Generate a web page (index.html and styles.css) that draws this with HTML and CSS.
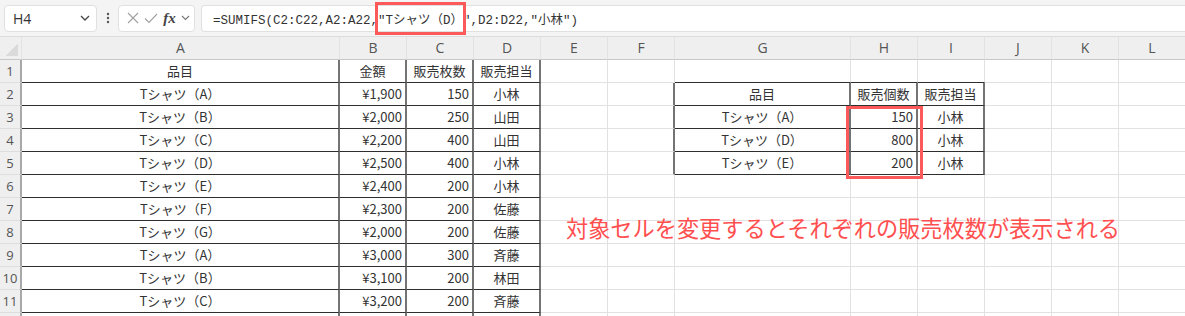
FILE: index.html
```html
<!DOCTYPE html>
<html lang="ja">
<head>
    <meta charset="UTF-8">
    <title>SUMIFS</title>
    <link rel="stylesheet" href="styles.css">
</head>
<body>
    <div class="toolbar">
        <div class="namebox">
            <span>H4</span>
            <svg width="10" height="6" viewBox="0 0 10 6"><polyline points="1,1 5,5 9,1" fill="none" stroke="#444" stroke-width="1.3"/></svg>
        </div>
        <div class="dots">
            <svg width="4" height="12" viewBox="0 0 4 12"><circle cx="2" cy="2" r="1.2" fill="#555"/><circle cx="2" cy="6" r="1.2" fill="#555"/><circle cx="2" cy="10" r="1.2" fill="#555"/></svg>
        </div>
        <div class="fxbox">
            <svg width="12" height="12" viewBox="0 0 12 12"><path d="M1 1 L11 11 M11 1 L1 11" stroke="#a0a0a0" stroke-width="1.1"/></svg>
            <svg width="14" height="11" viewBox="0 0 14 11"><polyline points="1,5.5 5,9.5 13,1" fill="none" stroke="#a0a0a0" stroke-width="1.1"/></svg>
            <span class="fx">fx</span>
            <svg width="9" height="6" viewBox="0 0 9 6"><polyline points="1,1 4.5,4.5 8,1" fill="none" stroke="#777" stroke-width="1.1"/></svg>
        </div>
        <div class="formula">
            <span>=SUMIFS(C2:C22,A2:A22,"Tシャツ（D）",D2:D22,"小林")</span>
            <div class="mark formula-mark"></div>
        </div>
    </div>

    <div class="sheet">
        <table class="grid">
            <colgroup>
                <col style="width:22px">
                <col style="width:318px">
                <col style="width:67px"><col style="width:67px"><col style="width:67px">
                <col style="width:67px"><col style="width:67px">
                <col style="width:176px">
                <col style="width:67px"><col style="width:67px"><col style="width:67px"><col style="width:67px"><col style="width:67px">
            </colgroup>
            <tr class="head">
                <th class="corner"></th>
                <th>A</th><th>B</th><th>C</th><th>D</th><th>E</th><th>F</th>
                <th>G</th><th>H</th><th>I</th><th>J</th><th>K</th><th>L</th>
            </tr>
            <tr>
                <td class="rh">1</td>
                <td class="b c">品目</td><td class="b c">金額</td><td class="b c">販売枚数</td><td class="b c">販売担当</td>
                <td></td><td></td>
                <td class="bt"></td><td class="bt"></td><td class="bt"></td>
                <td></td><td></td><td></td>
            </tr>
            <tr>
                <td class="rh">2</td>
                <td class="b c">Tシャツ（A）</td><td class="b r">¥1,900</td><td class="b r">150</td><td class="b c">小林</td>
                <td></td><td class="bl"></td>
                <td class="b c">品目</td><td class="b c">販売個数</td><td class="b c">販売担当</td>
                <td></td><td></td><td></td>
            </tr>
            <tr>
                <td class="rh">3</td>
                <td class="b c">Tシャツ（B）</td><td class="b r">¥2,000</td><td class="b r">250</td><td class="b c">山田</td>
                <td></td><td class="bl"></td>
                <td class="b c">Tシャツ（A）</td><td class="b r">150</td><td class="b c">小林</td>
                <td></td><td></td><td></td>
            </tr>
            <tr>
                <td class="rh">4</td>
                <td class="b c">Tシャツ（C）</td><td class="b r">¥2,200</td><td class="b r">400</td><td class="b c">山田</td>
                <td></td><td class="bl"></td>
                <td class="b c">Tシャツ（D）</td><td class="b r">800</td><td class="b c">小林</td>
                <td></td><td></td><td></td>
            </tr>
            <tr>
                <td class="rh">5</td>
                <td class="b c">Tシャツ（D）</td><td class="b r">¥2,500</td><td class="b r">400</td><td class="b c">小林</td>
                <td></td><td class="bl"></td>
                <td class="b c">Tシャツ（E）</td><td class="b r">200</td><td class="b c">小林</td>
                <td></td><td></td><td></td>
            </tr>
            <tr>
                <td class="rh">6</td>
                <td class="b c">Tシャツ（E）</td><td class="b r">¥2,400</td><td class="b r">200</td><td class="b c">小林</td>
                <td></td><td></td><td></td><td></td><td></td><td></td><td></td><td></td>
            </tr>
            <tr>
                <td class="rh">7</td>
                <td class="b c">Tシャツ（F）</td><td class="b r">¥2,300</td><td class="b r">200</td><td class="b c">佐藤</td>
                <td></td><td></td><td></td><td></td><td></td><td></td><td></td><td></td>
            </tr>
            <tr>
                <td class="rh">8</td>
                <td class="b c">Tシャツ（G）</td><td class="b r">¥2,000</td><td class="b r">200</td><td class="b c">佐藤</td>
                <td></td><td></td><td></td><td></td><td></td><td></td><td></td><td></td>
            </tr>
            <tr>
                <td class="rh">9</td>
                <td class="b c">Tシャツ（A）</td><td class="b r">¥3,000</td><td class="b r">300</td><td class="b c">斉藤</td>
                <td></td><td></td><td></td><td></td><td></td><td></td><td></td><td></td>
            </tr>
            <tr>
                <td class="rh">10</td>
                <td class="b c">Tシャツ（B）</td><td class="b r">¥3,100</td><td class="b r">200</td><td class="b c">林田</td>
                <td></td><td></td><td></td><td></td><td></td><td></td><td></td><td></td>
            </tr>
            <tr>
                <td class="rh">11</td>
                <td class="b c">Tシャツ（C）</td><td class="b r">¥3,200</td><td class="b r">200</td><td class="b c">斉藤</td>
                <td></td><td></td><td></td><td></td><td></td><td></td><td></td><td></td>
            </tr>
            <tr>
                <td class="rh"></td>
                <td class="b c"></td><td class="b r"></td><td class="b r"></td><td class="b c"></td>
                <td></td><td></td><td></td><td></td><td></td><td></td><td></td><td></td>
            </tr>
        </table>

        <!-- highlight over H3:H5 and the floating note -->
        <div class="mark result-mark"></div>
        <div class="note">対象セルを変更するとそれぞれの販売枚数が表示される</div>
    </div>
</body>
</html>
```

FILE: styles.css
```css
body {
    margin: 0;
    width: 1185px;
    height: 316px;
    overflow: hidden;
    background-color: #ffffff;
    font-family: "Noto Sans CJK JP", sans-serif;
    color: #333;
}
.toolbar {
    display: flex;
    align-items: center;
    height: 37px;
    box-sizing: border-box;
    padding-left: 4px;
    background-color: #f4f4f4;
    border-bottom: 1px solid #dcdcdc;
}
.namebox {
    display: flex;
    align-items: center;
    justify-content: space-between;
    width: 93px;
    height: 27px;
    box-sizing: border-box;
    padding: 0 6px 0 8px;
    background-color: #fff;
    border: 1px solid #e0e0e0;
    border-radius: 4px;
    font-family: "Open Sans", sans-serif;
    font-size: 14px;
    color: #333;
}
.dots {
    display: flex;
    justify-content: center;
    width: 21px;
}
.fxbox {
    display: flex;
    align-items: center;
    justify-content: space-between;
    width: 77px;
    height: 27px;
    box-sizing: border-box;
    padding: 0 4px 0 8px;
    background-color: #fff;
    border: 1px solid #e0e0e0;
    border-radius: 4px;
}
.fx {
    font-family: "Liberation Serif", serif;
    font-style: italic;
    font-weight: bold;
    font-size: 15px;
    color: #444;
}
.formula {
    position: relative;
    flex: 1;
    display: flex;
    align-items: center;
    height: 27px;
    margin-left: 6px;
    box-sizing: border-box;
    padding-left: 11px;
    background-color: #fff;
    border: 1px solid #e0e0e0;
    border-right: none;
    border-radius: 4px 0 0 4px;
    font-family: "Liberation Mono", "Noto Sans CJK JP", monospace;
    font-size: 12.5px;
    color: #333;
    white-space: pre;
}
.mark {
    position: absolute;
    box-sizing: border-box;
    border: 3px solid #fc5a5a;
}
.formula-mark {
    left: 173px;
    top: -4px;
    width: 91px;
    height: 33px;
}
.sheet {
    position: relative;
}
.grid {
    table-layout: fixed;
    width: 1186px;
    border-collapse: separate;
    border-spacing: 0;
    font-size: 13px;
}
.grid tr {
    height: 23px;
}
.grid th,
.grid td {
    box-sizing: border-box;
    padding: 0 3px;
    white-space: nowrap;
    overflow: hidden;
    line-height: 20px;
    border-right: 1px solid #e1e1e1;
    border-bottom: 1px solid #e1e1e1;
}
.grid th {
    background-color: #efefef;
    font-family: "Open Sans", sans-serif;
    font-weight: normal;
    font-size: 14px;
    color: #555;
    border-right-color: #e2e2e2;
    border-bottom-color: #c8c8c8;
}
.grid th.corner {
    background: linear-gradient(135deg, transparent 50%, #dadada 50%) right 3px bottom 3px / 12px 12px no-repeat, #efefef;
}
.grid td.rh {
    padding: 0;
    text-align: center;
    background-color: #efefef;
    font-family: "Open Sans", sans-serif;
    color: #555;
    border-right: 2px solid #a8a8a8;
    border-bottom-color: #dedede;
}
.grid td.b {
    border-right: 2px solid #747474;
    border-bottom: 1px solid #2e2e2e;
}
.grid td.bt {
    border-bottom: 1px solid #2e2e2e;
}
.grid td.bl {
    border-right: 2px solid #747474;
}
.c {
    text-align: center;
}
.r {
    text-align: right;
}
.result-mark {
    left: 846px;
    top: 69px;
    width: 77px;
    height: 73px;
}
.note {
    position: absolute;
    left: 566px;
    top: 179px;
    font-size: 22.2px;
    line-height: 22px;
    color: #ff4f4f;
    white-space: nowrap;
}
```
